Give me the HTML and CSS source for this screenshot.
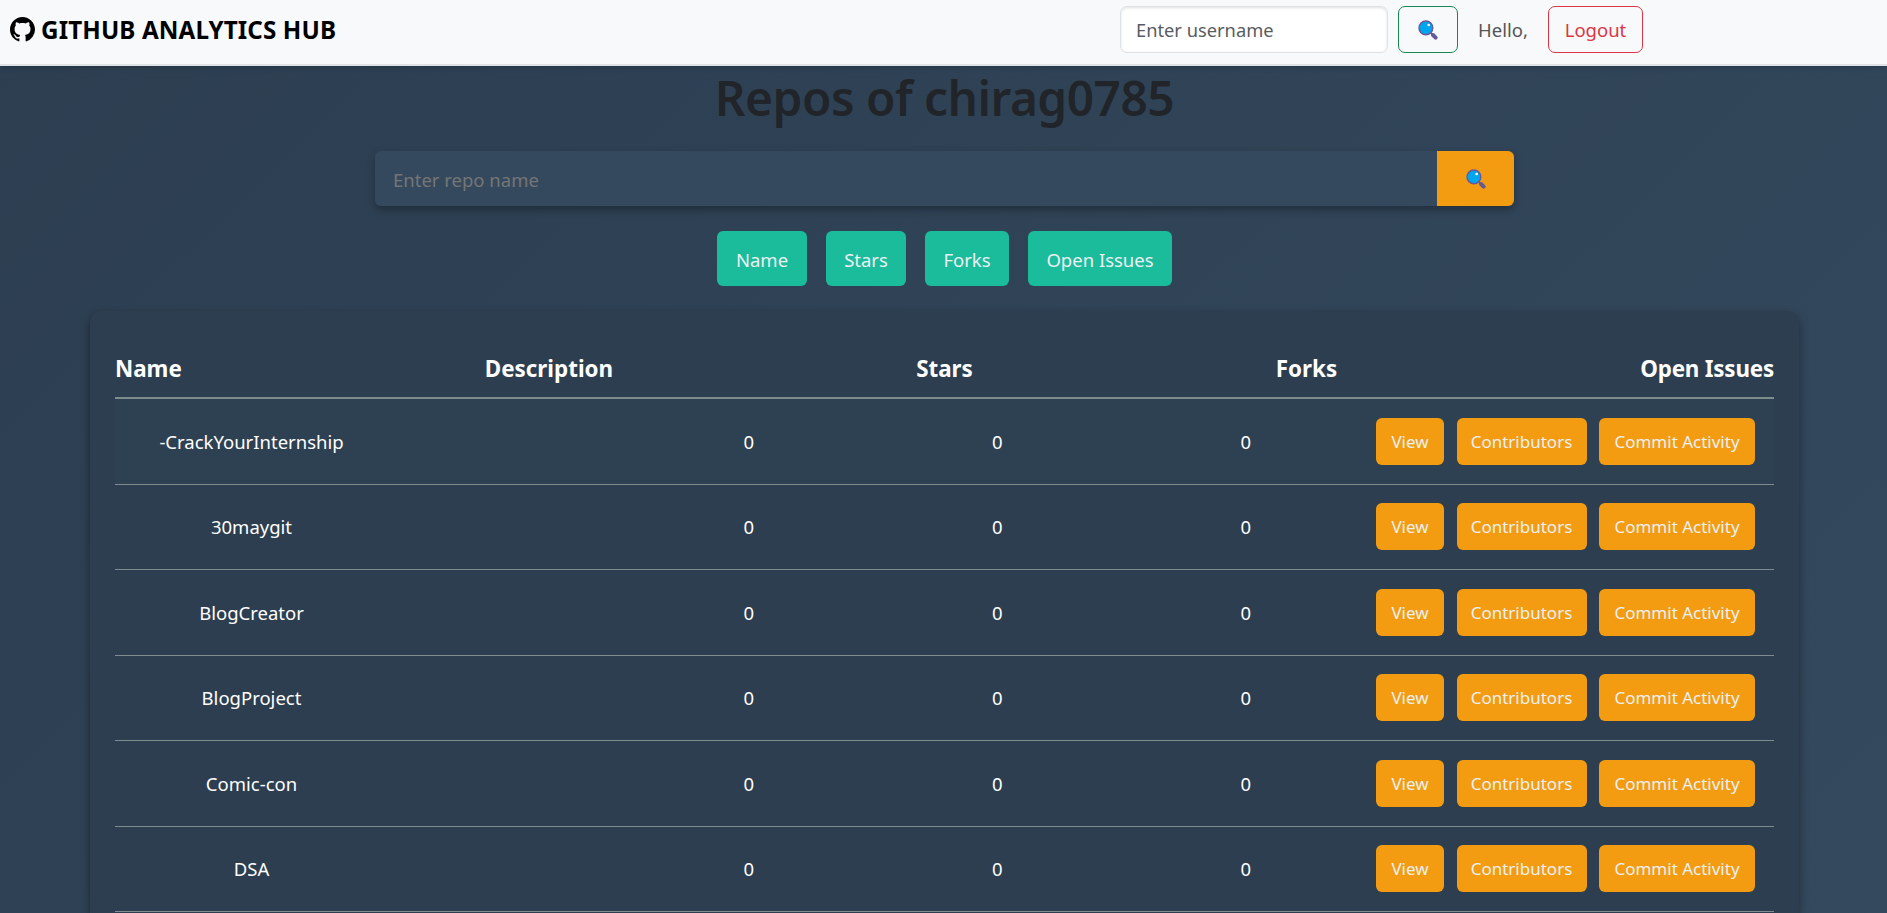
FILE: index.html
```html
<!DOCTYPE html>
<html lang="en">
<head>
<meta charset="utf-8">
<title>GitHub Analytics Hub</title>
<link rel="stylesheet" href="styles.css">
</head>
<body>
<svg class="defs" aria-hidden="true">
  <symbol id="lens" viewBox="0 0 20 20">
    <path d="M12.6 12.6l2 2" stroke="#6b579a" stroke-width="2"/>
    <path d="M15 15l2.6 2.6" stroke="#635994" stroke-width="4" stroke-linecap="round"/>
    <circle cx="7.9" cy="7.9" r="6.9" fill="#00a6ed" stroke="#6b579a" stroke-width="1.4"/>
    <circle cx="10.7" cy="5" r="1.3" fill="#fff"/>
  </symbol>
</svg>
<header class="navbar">
  <a class="brand">
    <svg class="brand-icon" viewBox="0 0 16 16"><path d="M8 0C3.58 0 0 3.58 0 8c0 3.54 2.29 6.53 5.47 7.59.4.07.55-.17.55-.38 0-.19-.01-.82-.01-1.49-2.01.37-2.53-.49-2.69-.94-.09-.23-.48-.94-.82-1.13-.28-.15-.68-.52-.01-.53.63-.01 1.08.58 1.23.82.72 1.21 1.87.87 2.33.66.07-.52.28-.87.51-1.07-1.78-.2-3.64-.89-3.64-3.95 0-.87.31-1.59.82-2.15-.08-.2-.36-1.02.08-2.12 0 0 .67-.21 2.2.82.64-.18 1.32-.27 2-.27s1.36.09 2 .27c1.53-1.04 2.2-.82 2.2-.82.44 1.1.16 1.92.08 2.12.51.56.82 1.27.82 2.15 0 3.07-1.87 3.75-3.65 3.95.29.25.54.73.54 1.48 0 1.07-.01 1.93-.01 2.2 0 .21.15.46.55.38A8.01 8.01 0 0 0 16 8c0-4.42-3.58-8-8-8"/></svg>
    <span>GITHUB ANALYTICS HUB</span>
  </a>
  <form class="user-form">
    <input class="user-input" type="text" placeholder="Enter username">
    <button class="btn-find" type="button"><svg class="lens"><use href="#lens"/></svg></button>
    <span class="hello">Hello,</span>
    <button class="btn-logout" type="button">Logout</button>
  </form>
</header>
<main>
  <h1 class="title">Repos of chirag0785</h1>
  <div class="search">
    <input class="search-input" type="text" placeholder="Enter repo name">
    <button class="search-btn" type="button"><svg class="lens"><use href="#lens"/></svg></button>
  </div>
  <div class="filters">
    <button class="filter name">Name</button>
    <button class="filter stars">Stars</button>
    <button class="filter forks">Forks</button>
    <button class="filter issues">Open Issues</button>
  </div>
  <section class="card">
    <div class="head"><span>Name</span><span>Description</span><span>Stars</span><span>Forks</span><span>Open Issues</span></div>
    <div class="row active"><span>-CrackYourInternship</span><span></span><span>0</span><span>0</span><span>0</span><div class="actions"><a class="btn view">View</a><a class="btn contrib">Contributors</a><a class="btn commits">Commit Activity</a></div></div>
    <div class="row"><span>30maygit</span><span></span><span>0</span><span>0</span><span>0</span><div class="actions"><a class="btn view">View</a><a class="btn contrib">Contributors</a><a class="btn commits">Commit Activity</a></div></div>
    <div class="row"><span>BlogCreator</span><span></span><span>0</span><span>0</span><span>0</span><div class="actions"><a class="btn view">View</a><a class="btn contrib">Contributors</a><a class="btn commits">Commit Activity</a></div></div>
    <div class="row"><span>BlogProject</span><span></span><span>0</span><span>0</span><span>0</span><div class="actions"><a class="btn view">View</a><a class="btn contrib">Contributors</a><a class="btn commits">Commit Activity</a></div></div>
    <div class="row"><span>Comic-con</span><span></span><span>0</span><span>0</span><span>0</span><div class="actions"><a class="btn view">View</a><a class="btn contrib">Contributors</a><a class="btn commits">Commit Activity</a></div></div>
    <div class="row"><span>DSA</span><span></span><span>0</span><span>0</span><span>0</span><div class="actions"><a class="btn view">View</a><a class="btn contrib">Contributors</a><a class="btn commits">Commit Activity</a></div></div>
  </section>
</main>
</body>
</html>
```
FILE: styles.css
```css
* { box-sizing: border-box; }
body {
  display: flex;
  flex-direction: column;
  margin: 0;
  height: 913px;
  overflow: hidden;
  font-family: "Noto Sans", "Open Sans", sans-serif;
  font-size: 18.5px;
  color: #ecf0f1;
  background: linear-gradient(135deg, #2c3e50, #34495e);
}
button, input { font: inherit; margin: 0; padding: 0; }
.defs { position: absolute; width: 0; height: 0; }
.lens { display: block; width: 20px; height: 20px; }
.navbar {
  position: relative;
  z-index: 1;
  display: flex;
  flex: none;
  justify-content: space-between;
  height: 66px;
  padding: 6px 244px 0 10px;
  background: #f8f9fa;
  border-bottom: 2px solid #e0e3e5;
  box-shadow: 0 2px 5px rgba(0, 0, 0, .15);
}
.brand {
  display: flex;
  align-items: center;
  gap: 6px;
  height: 46px;
  color: #000;
  font-size: 24.2px;
  font-weight: 700;
  letter-spacing: .13px;
}
.brand-icon { width: 25px; height: 25px; }
.user-form { display: flex; height: 47px; align-items: center; }
.user-input {
  width: 268px;
  height: 47px;
  padding: 0 15px;
  border: 1px solid #dee2e6;
  border-radius: 7px;
  background: #fff;
  box-shadow: inset 0 1px 3px rgba(0, 0, 0, .12);
  font-size: 18.3px;
}
.user-input::placeholder { color: #595c5f; opacity: 1; }
.btn-find {
  display: grid;
  place-items: center;
  width: 60px;
  height: 47px;
  margin-left: 10px;
  border: 1px solid #198754;
  border-radius: 7px;
  background: none;
}
.hello { width: 70px; margin-left: 20px; color: #555; }
.btn-logout {
  width: 95px;
  height: 47px;
  border: 1px solid #dc3545;
  border-radius: 7px;
  background: none;
  color: #dc3545;
}
main {
  display: flex;
  flex: 1;
  flex-direction: column;
  align-items: center;
  min-height: 0;
  padding-left: 2px;
}
.title {
  flex: none;
  margin: 0 0 22px;
  line-height: 63px;
  font-size: 47.8px;
  font-weight: 600;
  letter-spacing: -.5px;
  color: #212529;
}
.search {
  display: flex;
  flex: none;
  width: 1139px;
  height: 55px;
  margin-bottom: 25px;
  border-radius: 6px;
  overflow: hidden;
  box-shadow: 0 4px 8px rgba(0, 0, 0, .3);
}
.search-input { flex: 1; padding: 1px 18px 0; border: 0; background: #34495e; }
.search-input::placeholder { color: #757575; opacity: 1; }
.search-btn { display: grid; place-items: center; width: 77px; border: 0; background: #f39c12; }
.filters { display: flex; flex: none; justify-content: center; gap: 19px; }
.filter { height: 55px; padding-top: 1px; border: 0; border-radius: 6px; background: #1abc9c; color: #ecf0f1; }
.filter.name { width: 90px; }
.filter.stars { width: 80px; }
.filter.forks { width: 84px; }
.filter.issues { width: 144px; }
.card {
  flex: 1 0 0;
  min-height: 0;
  width: 1709px;
  margin-top: 25px;
  padding: 25px 25px 0;
  border-radius: 12px 12px 0 0;
  background: #2c3e50;
  box-shadow: 0 4px 10px rgba(0, 0, 0, .4);
}
.head {
  display: flex;
  justify-content: space-between;
  height: 63px;
  padding-top: 16px;
  border-bottom: 2px solid #7f8c8d;
  line-height: 34px;
  font-size: 22.4px;
  font-weight: 700;
  color: #fff;
}
.head span:last-child { letter-spacing: -.2px; }
.row {
  display: grid;
  grid-template-columns: 273px 236.5px 248.5px 248.5px 248.5px 1fr;
  align-items: center;
  height: 85.5px;
  border-bottom: 1px solid #7f8c8d;
  text-align: center;
  color: #fff;
}
.row.active { background: #2d4152; }
.actions { display: flex; gap: 12.5px; padding-left: 6px; }
.btn {
  height: 47px;
  line-height: 47px;
  border-radius: 6px;
  background: #f39c12;
  color: #ecf0f1;
  font-size: 17px;
}
.btn.view { width: 68px; }
.btn.contrib { width: 130px; }
.btn.commits { width: 156px; }
```
